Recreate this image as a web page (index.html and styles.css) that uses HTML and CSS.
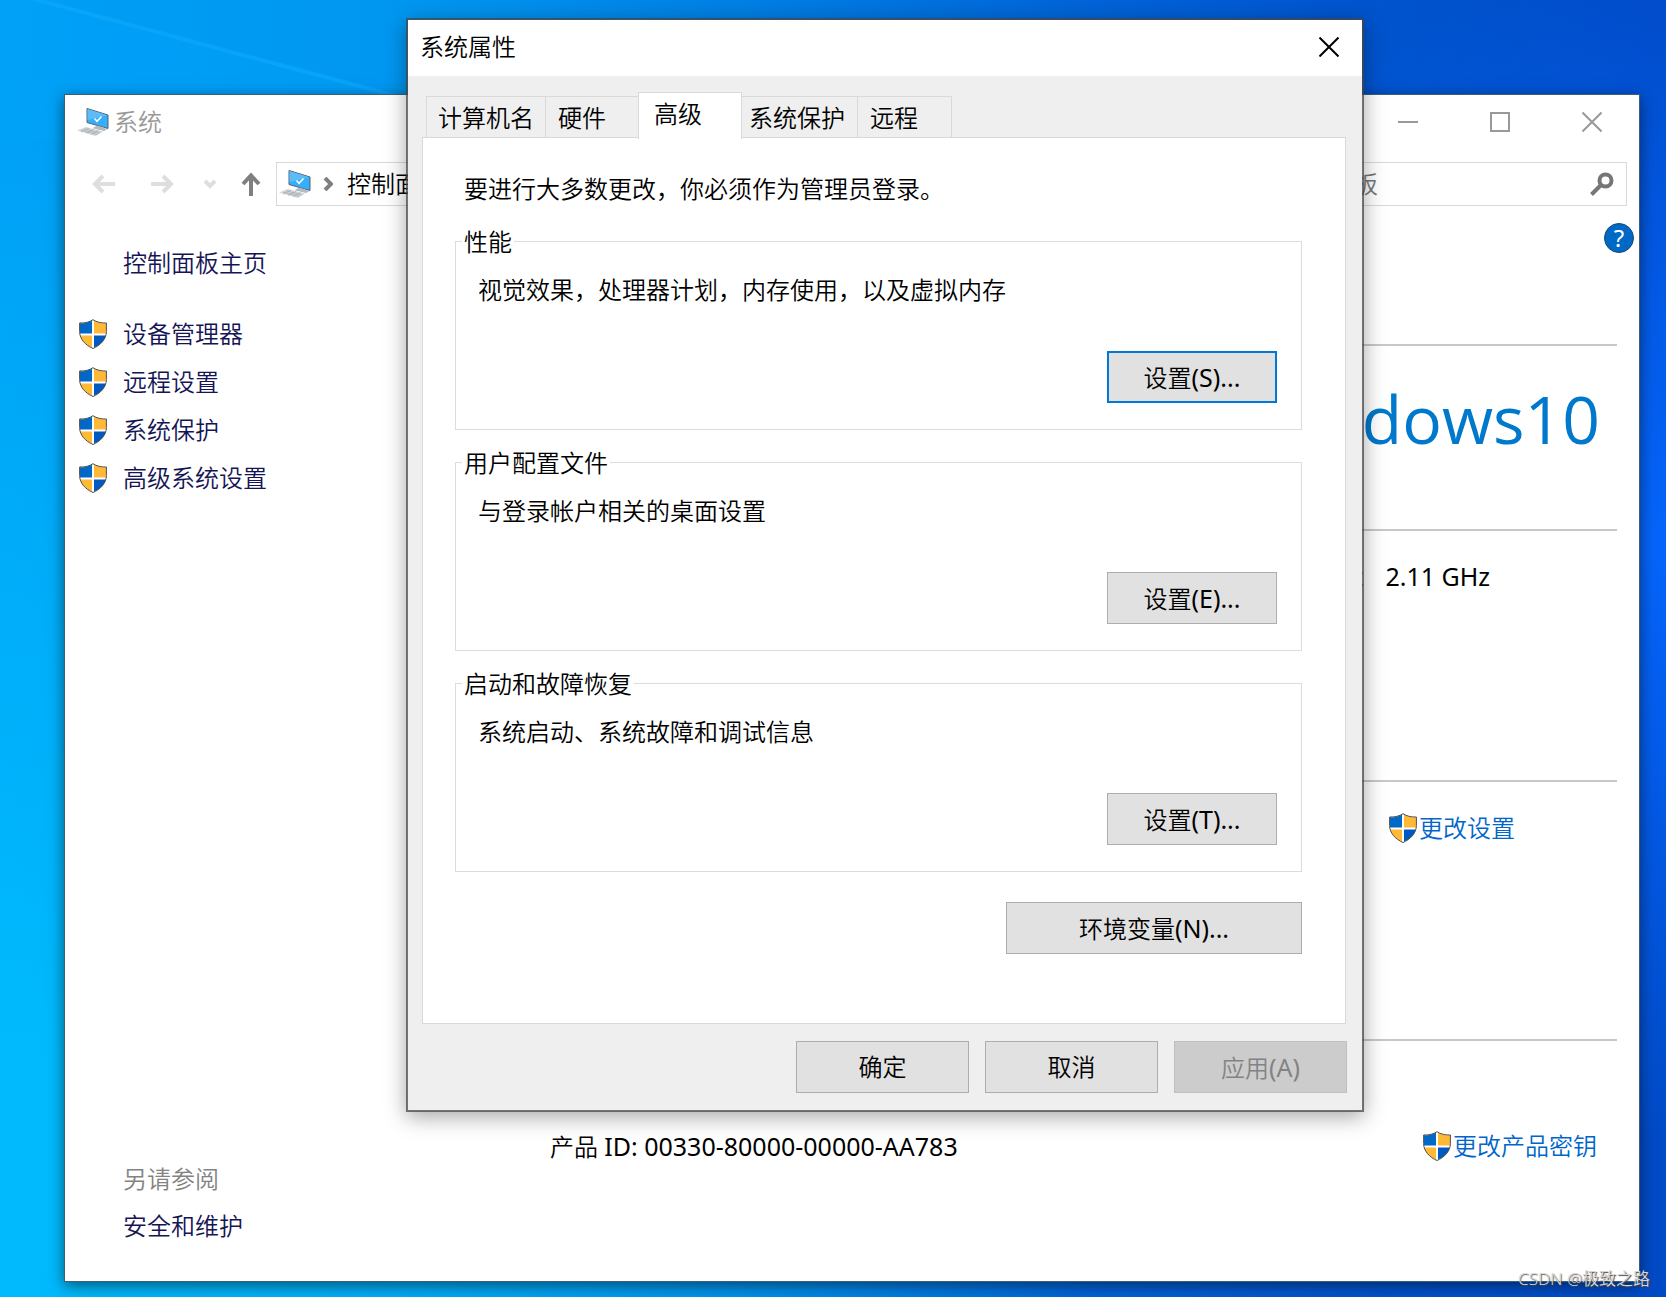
FILE: index.html
```html
<!DOCTYPE html>
<html lang="zh-CN">
<head>
<meta charset="utf-8">
<meta name="viewport" content="width=device-width, initial-scale=1">
<title>系统属性</title>
<link rel="stylesheet" href="styles.css">
</head>
<body>
<svg class="defs" width="0" height="0" aria-hidden="true">
  <symbol id="shield" viewBox="0 0 28 30">
    <path d="M14 1C10.500 3.400 5.500 4.500 1 4.300V12.500C1 20 6.500 26 14 29.200C21.500 26 27 20 27 12.500V4.300C22.500 4.500 17.500 3.400 14 1Z" fill="#fff"/>
    <path d="M13 1.500V14.500H1V4.300C5.500 4.500 10 3.500 13 1.500Z" fill="#0069c8"/>
    <path d="M15 1.500V14.500H27V4.300C22.500 4.500 18 3.500 15 1.500Z" fill="#ffb935"/>
    <path d="M1.300 16.500H13V28.600C7 26 2.500 22 1.300 16.500Z" fill="#ffb935"/>
    <path d="M26.700 16.500H15V28.600C21 26 25.500 22 26.700 16.500Z" fill="#0059bf"/>
    <path d="M14 .7C10.500 3.200 5.500 4.200 .6 4V12.500C.6 20 6.500 26.300 14 29.500C21.500 26.300 27.400 20 27.400 12.500V4C22.500 4.200 17.500 3.200 14 .7Z" fill="none" stroke="#4d4d4d"/>
  </symbol>
  <symbol id="computer" viewBox="0 0 32 28">
    <path d="M10 .5L31 7V20.500L10 14.500Z" fill="#35aefc" stroke="#55606a"/>
    <path d="M10.500 1L30.500 7.200L10.500 12Z" fill="#5bbcf8"/>
    <path d="M17.500 10.500L20 13.300L24.500 8.500" fill="none" stroke="#fff" stroke-width="1.500"/>
    <path d="M20 17.500L26 19.300L30 21.500L27 23L15.500 20.200Z" fill="#b3bac0"/>
    <path d="M0 22.500L9 19L26 23.500L18.500 28Z" fill="#d3d7da"/>
    <path d="M4 22L21 26.500M7 20.800L23 25M4 24L12 20.200M9 25.300L17 21.500M14 26.600L21.500 22.600" stroke="#a3aab0" stroke-width=".7" fill="none"/>
  </symbol>
</svg>

<div class="desktop">
  <svg class="wallpaper" viewBox="0 0 1666 1297" preserveAspectRatio="none" aria-hidden="true">
    <path d="M0 0H30L400 96L560 140H0Z" fill="#00a8ff" opacity=".2"/>
    <path d="M30 -2L400 97" stroke="#10adff" stroke-width="4" opacity=".5"/>
  </svg>

  <section class="window" aria-label="系统">
    <header class="titlebar">
      <svg class="computer"><use href="#computer"/></svg>
      <h1 class="window-title">系统</h1>
      <div class="caption-buttons">
        <button class="caption-button" aria-label="最小化"><svg viewBox="0 0 20 20"><path d="M0 10H20"/></svg></button>
        <button class="caption-button" aria-label="最大化"><svg viewBox="0 0 20 20"><path d="M1 1H19V19H1Z"/></svg></button>
        <button class="caption-button" aria-label="关闭"><svg viewBox="0 0 20 20"><path d="M.5 .5L19.500 19.500M19.500 .5L.5 19.500"/></svg></button>
      </div>
    </header>

    <nav class="toolbar" aria-label="导航">
      <button class="nav-button back" aria-label="后退" disabled><svg viewBox="0 0 24 24"><path d="M23 12H3M11 4L3 12L11 20"/></svg></button>
      <button class="nav-button forward" aria-label="前进" disabled><svg viewBox="0 0 24 24"><path d="M1 12H21M13 4L21 12L13 20"/></svg></button>
      <button class="nav-button recent" aria-label="最近" disabled><svg viewBox="0 0 14 24"><path d="M2 9L7 14L12 9"/></svg></button>
      <button class="nav-button up" aria-label="向上"><svg viewBox="0 0 24 24"><path d="M12 24V3M4 12L12 3.500L20 12"/></svg></button>
      <div class="address">
        <svg class="computer"><use href="#computer"/></svg>
        <svg class="crumb" viewBox="0 0 10 14"><path d="M2 1L8 7L2 13"/></svg>
        <a class="crumb-link" href="#">控制面板</a>
      </div>
      <div class="search">
        <input class="search-input" type="text" aria-label="搜索" placeholder="搜索控制面板">
        <svg class="search-icon" viewBox="0 0 24 24"><circle cx="15.500" cy="8.500" r="6"/><path d="M11 13L1.500 22.500"/></svg>
      </div>
    </nav>

    <div class="window-body">
      <aside class="sidebar">
        <a class="side-home" href="#">控制面板主页</a>
        <ul class="side-list">
          <li><a href="#"><svg class="shield"><use href="#shield"/></svg>设备管理器</a></li>
          <li><a href="#"><svg class="shield"><use href="#shield"/></svg>远程设置</a></li>
          <li><a href="#"><svg class="shield"><use href="#shield"/></svg>系统保护</a></li>
          <li><a href="#"><svg class="shield"><use href="#shield"/></svg>高级系统设置</a></li>
        </ul>
        <div class="see-also">
          <h2 class="see-title">另请参阅</h2>
          <a href="#">安全和维护</a>
        </div>
      </aside>

      <main class="content">
        <button class="help" aria-label="帮助">?</button>
        <div class="section edition"><div class="brand">Windows<span class="brand-number">10</span></div></div>
        <div class="section system latin"><span>1.90GHz</span><span>2.11 GHz</span></div>
        <div class="section computer-name"><a class="action" href="#"><svg class="shield"><use href="#shield"/></svg>更改设置</a></div>
        <div class="section activation">
          <span>产品 <span class="latin">ID: 00330-80000-00000-AA783</span></span>
          <a class="action" href="#"><svg class="shield"><use href="#shield"/></svg>更改产品密钥</a>
        </div>
      </main>
    </div>
  </section>

  <section class="dialog" role="dialog" aria-labelledby="dialog-title">
    <header class="dialog-titlebar">
      <h1 class="dialog-title" id="dialog-title">系统属性</h1>
      <button class="dialog-close" aria-label="关闭"><svg viewBox="0 0 20 20"><path d="M.5 .5L19.500 19.500M19.500 .5L.5 19.500"/></svg></button>
    </header>
    <div class="tabs" role="tablist">
      <button class="tab name-tab" role="tab">计算机名</button>
      <button class="tab hardware-tab" role="tab">硬件</button>
      <button class="tab active" role="tab" aria-selected="true">高级</button>
      <button class="tab protection-tab" role="tab">系统保护</button>
      <button class="tab remote-tab" role="tab">远程</button>
    </div>
    <div class="panel" role="tabpanel">
      <p class="notice">要进行大多数更改，你必须作为管理员登录。</p>
      <fieldset class="group">
        <legend>性能</legend>
        <p>视觉效果，处理器计划，内存使用，以及虚拟内存</p>
        <button class="button focused">设置<span class="latin">(S)...</span></button>
      </fieldset>
      <fieldset class="group">
        <legend>用户配置文件</legend>
        <p>与登录帐户相关的桌面设置</p>
        <button class="button">设置<span class="latin">(E)...</span></button>
      </fieldset>
      <fieldset class="group">
        <legend>启动和故障恢复</legend>
        <p>系统启动、系统故障和调试信息</p>
        <button class="button">设置<span class="latin">(T)...</span></button>
      </fieldset>
      <button class="button env">环境变量<span class="latin">(N)...</span></button>
    </div>
    <footer class="dialog-footer">
      <button class="button">确定</button>
      <button class="button">取消</button>
      <button class="button" disabled>应用<span class="latin">(A)</span></button>
    </footer>
  </section>

  <div class="watermark">CSDN @极致之路</div>
</div>
</body>
</html>
```

FILE: styles.css
```css
* { box-sizing: border-box; }

body {
  margin: 0;
  font: 350 24px/32px "Noto Sans", "Noto Sans CJK SC", sans-serif;
  color: #000;
}

h1, h2, p, ul { margin: 0; padding: 0; font-size: inherit; font-weight: inherit; }
ul { list-style: none; }
a { color: inherit; text-decoration: none; }
svg { display: block; flex: none; }
.defs { position: absolute; }

button {
  margin: 0;
  padding: 0;
  border: 0;
  background: none;
  font: inherit;
  color: inherit;
}

.latin { font-size: 25px; font-weight: 400; }

.desktop {
  position: relative;
  display: flex;
  min-height: 100vh;
  padding: 94px 26px 15px 64px;
  overflow: hidden;
  background:
    radial-gradient(ellipse 500px 600px at 100% 42%, #0565fb, rgba(5, 101, 251, 0)),
    radial-gradient(ellipse 1100px 1100px at 0 90%, rgba(0, 195, 255, .75) 10%, rgba(0, 195, 255, 0)),
    linear-gradient(90deg, #009ff6 0%, #0096f0 25%, #007fe4 45%, #0064d8 65%, #0054ce 82%, #014ac6 100%);
}

.wallpaper { position: absolute; inset: 0; width: 100%; height: 100%; }

.shield { width: 28px; height: 30px; }
.computer { width: 32px; height: 28px; }

/* System window */

.window {
  position: relative;
  flex: 1;
  display: flex;
  flex-direction: column;
  border: 1px solid #3c5f78;
  background: #fff;
  box-shadow: 0 4px 14px rgba(0, 0, 0, .5);
}

.titlebar { display: flex; align-items: center; height: 54px; padding-left: 12px; color: #999; }
.window-title { flex: 1; margin-left: 5px; }
.caption-buttons { display: flex; margin-right: 1px; }
.caption-button { display: grid; place-items: center; width: 92px; height: 54px; }
.caption-button svg { width: 20px; height: 20px; fill: none; stroke: #999; stroke-width: 2; }

.toolbar { display: flex; align-items: center; height: 44px; margin-top: 13px; padding: 0 12px 0 27px; }
.nav-button svg { width: 24px; height: 24px; fill: none; stroke: #7f7f7f; stroke-width: 4; }
.nav-button:disabled svg { stroke: #dedede; }
.back { margin-right: 34px; }
.forward { margin-right: 29px; }
.recent { margin-right: 22px; }
.recent svg { width: 14px; }
.up { margin-right: 13px; }

.address, .search { display: flex; align-items: center; height: 44px; border: 1px solid #d9d9d9; }
.address { flex: 1; padding-left: 2px; }
.crumb { width: 10px; height: 14px; margin: 0 14px 0 12px; fill: none; stroke: #7f7f7f; stroke-width: 4; }
.search { width: 404px; margin-left: 12px; padding: 0 12px 0 10px; }
.search-input { flex: 1; min-width: 0; padding: 0; border: 0; outline: 0; background: none; font: inherit; }
.search-input::placeholder { color: #767676; opacity: 1; }
.search-icon { width: 24px; height: 24px; fill: none; stroke: #767676; stroke-width: 4; }

.window-body { flex: 1; display: flex; }

.sidebar { display: flex; flex-direction: column; width: 440px; padding: 41px 0 39px 14px; color: #151555; }
.side-home, .see-also { margin-left: 44px; }
.side-list { display: flex; flex-direction: column; gap: 16px; margin-top: 39px; }
.side-list a { display: flex; align-items: center; gap: 16px; height: 32px; }
.see-also { display: flex; flex-direction: column; gap: 15px; margin-top: auto; }
.see-title { color: #838383; }

.content { flex: 1; display: flex; flex-direction: column; padding: 17px 22px 38px 45px; }
.help {
  align-self: flex-end;
  width: 30px;
  height: 30px;
  margin-right: -17px;
  border: 1px solid #17476f;
  border-radius: 50%;
  background: #0069c8;
  color: #fff;
  font-weight: 400;
  line-height: 28px;
}
.section { display: flex; justify-content: flex-end; border-top: 2px solid #c8c8c8; }
.edition { height: 185px; margin-top: 91px; padding: 24px 17px 0 0; }
.brand { font: 400 66px/96px "Open Sans", sans-serif; color: #0078cc; }
.system { gap: 22px; height: 251px; padding: 29px 127px 0 0; }
.computer-name { height: 259px; padding: 30px 102px 0 0; }
.activation { justify-content: space-between; padding: 89px 20px 0 0; }
.action { display: flex; align-items: center; gap: 2px; height: 32px; color: #0066cc; }

/* System properties dialog */

.dialog {
  position: absolute;
  top: 18px;
  left: 406px;
  right: 302px;
  display: flex;
  flex-direction: column;
  border: 2px solid rgba(70, 70, 70, .75);
  background: #efefef;
  background-clip: padding-box;
  box-shadow: 0 5px 20px rgba(0, 0, 0, .35);
}

.dialog-titlebar { display: flex; align-items: center; justify-content: space-between; height: 56px; padding: 0 23px 2px 12px; background: #fff; }
.dialog-close svg { width: 20px; height: 20px; fill: none; stroke: #000; stroke-width: 2; }

.tabs { display: flex; position: relative; align-items: flex-end; height: 62px; margin-left: 18px; }
.tab { height: 42px; padding: 0 0 0 11px; border: 1px solid #d9d9d9; border-width: 1px 1px 0 0; text-align: left; }
.name-tab { width: 120px; border-left-width: 1px; }
.hardware-tab { width: 92px; border-right-width: 0; padding-left: 12px; }
.active { width: 104px; height: 47px; margin-bottom: -1px; padding: 0 0 4px 15px; border-left-width: 1px; background: #fff; }
.protection-tab { width: 116px; padding-left: 7px; }
.remote-tab { width: 94px; padding-left: 12px; }

.panel {
  display: flex;
  flex-direction: column;
  margin: -1px 16px 0 14px;
  padding: 35px 43px 69px 32px;
  border: 1px solid #d9d9d9;
  background: #fff;
}
.notice { margin: 0 0 20px 9px; }

.group {
  display: flex;
  flex-direction: column;
  min-width: 0;
  margin: 0 0 16px;
  padding: 17px 24px 26px 22px;
  border: 1px solid #dcdcdc;
}
.group legend { margin-left: -16px; padding: 1px 2px 0; line-height: 31px; }

.button { height: 52px; border: 1px solid #adadad; background: #e1e1e1; }
.group .button { align-self: flex-end; width: 170px; margin-top: 45px; }
.button.focused { border: 2px solid #0078d7; }
.button:disabled { border-color: #bfbfbf; background: #ccc; color: #838383; }
.env { align-self: flex-end; width: 296px; margin-top: 14px; }

.dialog-footer { display: flex; justify-content: flex-end; gap: 16px; padding: 17px 15px 17px 0; }
.dialog-footer .button { width: 173px; }

.watermark {
  position: absolute;
  right: 16px;
  bottom: 6px;
  font-size: 17px;
  line-height: 24px;
  color: #d6d6d6;
  text-shadow: 1px 1px 1px #444;
}
```
